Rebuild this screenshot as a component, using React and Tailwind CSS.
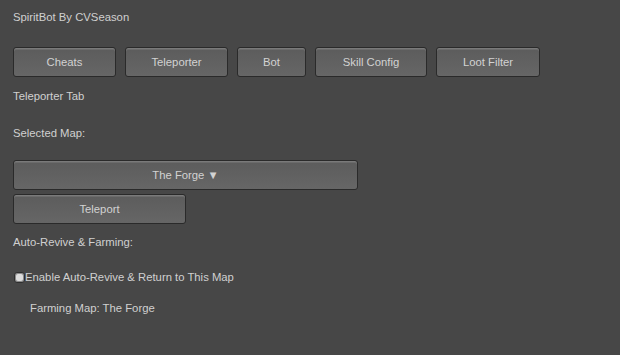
import React, { useState } from 'react';

const tabs = ['Cheats', 'Teleporter', 'Bot', 'Skill Config', 'Loot Filter'];
const tabWidths = ['w-[103px]', 'w-[103px]', 'w-[69px]', 'w-[112px]', 'w-[104px]'];

function UButton({ className, children }) {
  return (
    <button
      className={
        'flex items-center justify-center rounded-[3px] border border-[#2a2a2a] bg-gradient-to-b from-[#5c5c5c] to-[#666666] text-[#d2d2d2] shadow-[inset_0_1px_0_#7a7a7a,inset_0_2px_0_#6b6b6b] ' +
        className
      }
    >
      {children}
    </button>
  );
}

export default function App() {
  const [revive, setRevive] = useState(true);

  return (
    <div className="h-[355px] w-[620px] bg-[#474747] pl-[13px] pt-[10px] font-['Liberation_Sans',Arial,sans-serif] text-[11.3px] text-[#d0d0d0]">
      <div className="h-[14px] leading-[14px]">SpiritBot By CVSeason</div>

      {/* tab row */}
      <div className="mt-[23px] flex gap-[9px]">
        {tabs.map((t, i) => (
          <UButton key={t} className={'h-[30px] ' + tabWidths[i]}>
            {t}
          </UButton>
        ))}
      </div>

      <div className="mt-[12px] h-[14px] leading-[14px]">Teleporter Tab</div>
      <div className="mt-[23px] h-[14px] leading-[14px]">Selected Map:</div>

      <UButton className="mt-[20px] h-[30px] w-[345px]">The Forge ▼</UButton>
      <UButton className="mt-[4px] h-[30px] w-[173px]">Teleport</UButton>

      <div className="mt-[11px] h-[14px] leading-[14px]">Auto-Revive &amp; Farming:</div>

      <label className="mt-[21px] flex h-[14px] items-center leading-[14px]" onClick={() => setRevive(!revive)}>
        <span className="ml-[1px] flex h-[11px] w-[11px] items-center justify-center rounded-[3px] border border-[#2e2e2e] bg-[#8a8a8a]">
          {revive && <span className="h-[7px] w-[7px] rounded-[2px] bg-[#dcdcdc]" />}
        </span>
        Enable Auto-Revive &amp; Return to This Map
      </label>

      <div className="ml-[17px] mt-[17px] h-[14px] leading-[14px]">Farming Map: The Forge</div>
    </div>
  );
}
